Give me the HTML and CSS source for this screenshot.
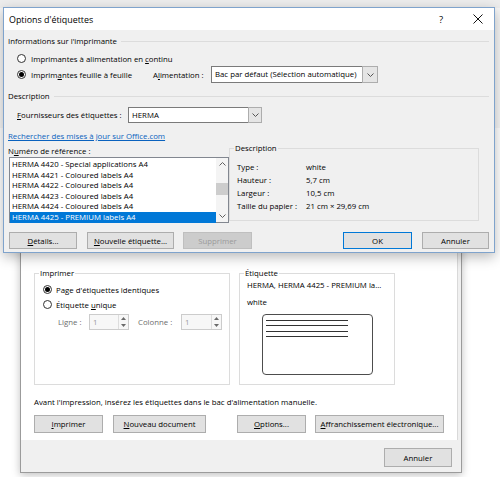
FILE: index.html
```html
<!DOCTYPE html>
<html lang="fr">

<head>
  <meta charset="UTF-8">
  <meta name="viewport" content="width=device-width, initial-scale=1.0">
  <title>Options d'étiquettes</title>
  <link rel="stylesheet" href="styles.css">
</head>

<body>
  <div class="desktop">
    <div class="word-window"></div>

    <!-- Enveloppes et étiquettes (behind) -->
    <div class="window back-dialog">
      <div class="tab-panel">
        <div class="group-row">
          <fieldset class="group print-group">
            <legend>Imprimer</legend>
            <div class="radio-row first"><span class="radio checked"></span><span>Page d'étiquettes identiques</span></div>
            <div class="radio-row"><span class="radio"></span><span>Étiquette <u>u</u>nique</span></div>
            <div class="spin-row">
              <span class="spin-label">Ligne :</span>
              <span class="spin">
                <span class="spin-value">1</span>
                <span class="spin-buttons">
                  <span class="spin-btn"><svg width="5" height="3" viewBox="0 0 5 3"><path d="M0 3 L2.5 0 L5 3 Z" fill="#6a6a6a"/></svg></span>
                  <span class="spin-btn"><svg width="5" height="3" viewBox="0 0 5 3"><path d="M0 0 L2.5 3 L5 0 Z" fill="#6a6a6a"/></svg></span>
                </span>
              </span>
              <span class="spin-label col-label">Colonne :</span>
              <span class="spin wide">
                <span class="spin-value">1</span>
                <span class="spin-buttons">
                  <span class="spin-btn"><svg width="5" height="3" viewBox="0 0 5 3"><path d="M0 3 L2.5 0 L5 3 Z" fill="#6a6a6a"/></svg></span>
                  <span class="spin-btn"><svg width="5" height="3" viewBox="0 0 5 3"><path d="M0 0 L2.5 3 L5 0 Z" fill="#6a6a6a"/></svg></span>
                </span>
              </span>
            </div>
          </fieldset>

          <fieldset class="group label-group">
            <legend>Étiquette</legend>
            <div class="label-info">
              <div class="label-name">HERMA, HERMA 4425 - PREMIUM la...</div>
              <div class="label-type">white</div>
              <div class="label-preview">
                <span class="preview-line"></span>
                <span class="preview-line"></span>
                <span class="preview-line"></span>
                <span class="preview-line"></span>
              </div>
            </div>
          </fieldset>
        </div>

        <p class="note">Avant l'impression, insérez les étiquettes dans le bac d'alimentation manuelle.</p>

        <div class="button-row">
          <button class="btn btn-print"><u>I</u>mprimer</button>
          <button class="btn btn-new"><u>N</u>ouveau document</button>
          <button class="btn btn-options"><u>O</u>ptions...</button>
          <button class="btn btn-postage"><u>A</u>ffranchissement électronique...</button>
        </div>
      </div>
      <div class="dialog-footer">
        <button class="btn btn-cancel-back">Annuler</button>
      </div>
    </div>

    <!-- Options d'étiquettes -->
    <div class="window front-dialog">
      <div class="title-bar">
        <span class="title">Options d'étiquettes</span>
        <span class="title-help">?</span>
        <span class="title-close">
          <svg width="10" height="10" viewBox="0 0 10 10"><path d="M0.5 0.5 L9.5 9.5 M9.5 0.5 L0.5 9.5" stroke="#111" stroke-width="1" fill="none"/></svg>
        </span>
      </div>

      <div class="dialog-body">
        <div class="section-head"><span>Informations sur l'imprimante</span></div>
        <div class="radio-row"><span class="radio"></span><span>Imprimantes à alimentation en <u>c</u>ontinu</span></div>
        <div class="printer-row">
          <span class="radio-label"><span class="radio checked"></span><span>Imprim<u>a</u>ntes feuille à feuille</span></span>
          <span class="field-label">A<u>l</u>imentation :</span>
          <span class="select tray-select">
            <span class="select-value">Bac par défaut (Sélection automatique)</span>
            <span class="select-arrow"><svg width="7" height="4" viewBox="0 0 7 4"><path d="M0.5 0.5 L3.5 3.5 L6.5 0.5" fill="none" stroke="#555" stroke-width="1"/></svg></span>
          </span>
        </div>

        <div class="section-head second"><span>Description</span></div>
        <div class="supplier-row">
          <span class="supplier-label"><u>F</u>ournisseurs des étiquettes :</span>
          <span class="select supplier-select">
            <span class="select-value">HERMA</span>
            <span class="select-arrow"><svg width="7" height="4" viewBox="0 0 7 4"><path d="M0.5 0.5 L3.5 3.5 L6.5 0.5" fill="none" stroke="#555" stroke-width="1"/></svg></span>
          </span>
        </div>

        <a class="update-link" href="#">Rechercher des mises à jour sur Office.com</a>

        <div class="lower">
          <div class="ref-col">
            <div class="ref-label">N<u>u</u>méro de référence :</div>
            <div class="ref-list">
              <div class="items">
                <div class="item">HERMA 4420 - Special applications A4</div>
                <div class="item">HERMA 4421 - Coloured labels A4</div>
                <div class="item">HERMA 4422 - Coloured labels A4</div>
                <div class="item">HERMA 4423 - Coloured labels A4</div>
                <div class="item">HERMA 4424 - Coloured labels A4</div>
                <div class="item selected">HERMA 4425 - PREMIUM labels A4</div>
              </div>
              <div class="scrollbar">
                <span class="sb-btn"><svg width="7" height="4" viewBox="0 0 7 4"><path d="M0.5 3.5 L3.5 0.5 L6.5 3.5" fill="none" stroke="#606060" stroke-width="1"/></svg></span>
                <span class="sb-track"><span class="sb-thumb"></span></span>
                <span class="sb-btn"><svg width="7" height="4" viewBox="0 0 7 4"><path d="M0.5 0.5 L3.5 3.5 L6.5 0.5" fill="none" stroke="#606060" stroke-width="1"/></svg></span>
              </div>
            </div>
          </div>

          <fieldset class="group desc-group">
            <legend>Description</legend>
            <div class="desc-grid">
              <span>Type :</span><span>white</span>
              <span>Hauteur :</span><span>5,7 cm</span>
              <span>Largeur :</span><span>10,5 cm</span>
              <span>Taille du papier :</span><span>21 cm × 29,69 cm</span>
            </div>
          </fieldset>
        </div>

        <div class="action-row">
          <button class="btn btn-details"><u>D</u>étails...</button>
          <button class="btn btn-new-label"><u>N</u>ouvelle étiquette...</button>
          <button class="btn btn-delete" disabled>Supprimer</button>
          <button class="btn btn-ok">OK</button>
          <button class="btn btn-cancel">Annuler</button>
        </div>
      </div>
    </div>
  </div>
</body>

</html>
```

FILE: styles.css
```css
body {
  margin: 0;
  font-family: "Open Sans", "Noto Sans", sans-serif;
  font-size: 7.8px;
  color: #000;
  background-color: #fff;
}

u {
  text-decoration: underline;
  text-underline-offset: 1px;
}

.desktop {
  position: relative;
  width: 500px;
  height: 477px;
  overflow: hidden;
  background-color: #fff;
}

.word-window {
  height: 120px;
  background-color: #f6f6f6;
  border-top: 8px solid #ededed;
}

.window {
  position: absolute;
  box-sizing: border-box;
  display: flex;
  flex-direction: column;
  background-color: #f0f0f0;
}

/* ---------- front dialog ---------- */

.front-dialog {
  left: 3px;
  top: 7px;
  width: 492px;
  height: 246px;
  border: 1px solid #7fa3cc;
  box-shadow: 0 4px 12px rgba(0, 0, 0, 0.28);
  z-index: 2;
}

.title-bar {
  height: 22px;
  display: flex;
  align-items: center;
  background-color: #fff;
}

.title {
  flex: 1;
  padding-left: 5px;
  font-size: 8.9px;
}

.title-help {
  width: 20px;
  margin-right: 11px;
  text-align: center;
  font-size: 9.5px;
}

.title-close {
  width: 32px;
  display: flex;
  justify-content: center;
}

.dialog-body {
  flex: 1;
  display: flex;
  flex-direction: column;
  padding: 5px 5px 0 4px;
}

.section-head {
  height: 12px;
  display: flex;
  align-items: center;
  gap: 4px;
}

.section-head::after {
  content: "";
  flex: 1;
  height: 1px;
  background-color: #dcdcdc;
}

.section-head.second {
  margin-top: 7px;
}

.radio-row {
  height: 15px;
  display: flex;
  align-items: center;
  padding-left: 9px;
  margin-top: 4px;
}

.radio {
  width: 9px;
  height: 9px;
  box-sizing: border-box;
  border: 1px solid #333;
  border-radius: 50%;
  background-color: #fff;
  margin-right: 5px;
  display: flex;
  align-items: center;
  justify-content: center;
  flex-shrink: 0;
}

.radio.checked::after {
  content: "";
  width: 5px;
  height: 5px;
  border-radius: 50%;
  background-color: #000;
}

.printer-row {
  height: 17px;
  display: flex;
  align-items: center;
  padding-left: 9px;
}

.radio-label {
  width: 136px;
  display: flex;
  align-items: center;
}

.field-label {
  width: 58px;
}

.select {
  display: flex;
  box-sizing: border-box;
  height: 17px;
}

.select-value {
  flex: 1;
  padding-left: 3px;
  background-color: #fff;
  border: 1px solid #7a7a7a;
  border-right: none;
  line-height: 15px;
  white-space: nowrap;
  overflow: hidden;
}

.select-arrow {
  width: 14px;
  display: flex;
  align-items: center;
  justify-content: center;
  background-color: #e5e5e5;
  border: 1px solid #adadad;
}

.tray-select {
  width: 167px;
}

.supplier-row {
  height: 16px;
  display: flex;
  align-items: center;
  padding-left: 9px;
  margin-top: 5px;
}

.supplier-label {
  width: 111px;
}

.supplier-select {
  width: 134px;
  height: 16px;
}

.supplier-select .select-value {
  line-height: 14px;
}

.supplier-select .select-arrow {
  width: 12px;
}

.update-link {
  margin-top: 7px;
  line-height: 12px;
  color: #0a62be;
  text-decoration: underline;
  align-self: flex-start;
}

.lower {
  margin-top: 1px;
  display: flex;
  align-items: flex-start;
}

.ref-col {
  width: 221px;
}

.ref-label {
  margin-top: 2px;
  line-height: 12px;
}

.ref-list {
  margin-left: 1px;
  width: 220px;
  height: 66px;
  box-sizing: border-box;
  border: 1px solid #828790;
  background-color: #fff;
  display: flex;
}

.items {
  flex: 1;
  padding-top: 1px;
}

.item {
  height: 10.6px;
  line-height: 10.6px;
  padding-left: 2px;
  white-space: nowrap;
}

.item.selected {
  background-color: #0078d7;
  color: #fff;
}

.scrollbar {
  width: 12px;
  display: flex;
  flex-direction: column;
  background-color: #f4f4f4;
}

.sb-btn {
  height: 12px;
  display: flex;
  align-items: center;
  justify-content: center;
}

.sb-track {
  flex: 1;
}

.sb-thumb {
  display: block;
  margin-top: 13px;
  height: 12px;
  background-color: #cdcdcd;
}

fieldset.group {
  margin: 0;
  padding: 0 4px;
  min-width: 0;
  box-sizing: border-box;
  border: 1px solid #dcdcdc;
}

fieldset.group legend {
  padding: 0 1px;
  line-height: 11px;
}

.desc-group {
  margin-left: 10px;
  width: 250px;
  height: 78px;
}

.desc-grid {
  padding: 6px 0 0 3px;
  display: grid;
  grid-template-columns: 69px auto;
  grid-auto-rows: 13px;
  align-items: center;
}

.action-row {
  margin-top: 9px;
  display: flex;
}

.btn {
  height: 17px;
  box-sizing: border-box;
  padding: 0;
  border: 1px solid #adadad;
  background-color: #e1e1e1;
  font: inherit;
  color: #000;
}

.btn-details {
  margin-left: 1px;
  width: 68px;
}

.btn-new-label {
  margin-left: 10px;
  width: 87px;
}

.btn-delete {
  margin-left: 9px;
  width: 69px;
  background-color: #cccccc;
  border-color: #bfbfbf;
  color: #9a9a9a;
}

.btn-ok {
  margin-left: auto;
  width: 69px;
  border-color: #0078d7;
}

.btn-cancel {
  margin-left: 10px;
  width: 67px;
}

/* ---------- back dialog ---------- */

.back-dialog {
  left: 20px;
  top: 231px;
  width: 442px;
  height: 242px;
  border: 1px solid #9b9b9b;
  box-shadow: 0 2px 8px rgba(0, 0, 0, 0.25);
  z-index: 1;
}

.tab-panel {
  height: 208px;
  box-sizing: border-box;
  margin-right: 3px;
  padding: 36px 0 0 13px;
  background-color: #fff;
  border-right: 1px solid #d9d9d9;
}

.group-row {
  display: flex;
  gap: 9px;
}

.print-group {
  width: 196px;
  height: 117px;
}

.label-group {
  width: 156px;
  height: 117px;
}

.print-group .radio-row {
  margin-top: 0;
  padding-left: 4px;
}

.print-group .radio-row.first {
  margin-top: 3px;
}

.print-group .radio {
  margin-right: 4px;
}

.spin-row {
  height: 16px;
  margin-top: 2px;
  padding-left: 19px;
  display: flex;
  align-items: center;
}

.spin-label {
  width: 31px;
  color: #6d6d6d;
}

.col-label {
  margin-left: 9px;
  width: 43px;
}

.spin {
  width: 40px;
  height: 16px;
  box-sizing: border-box;
  display: flex;
  border: 1px solid #cccccc;
  background-color: #f7f7f7;
}

.spin.wide {
  width: 41px;
}

.spin-value {
  flex: 1;
  padding-left: 3px;
  line-height: 14px;
  color: #9a9a9a;
}

.spin-buttons {
  width: 9px;
  display: flex;
  flex-direction: column;
  border-left: 1px solid #dddddd;
}

.spin-btn {
  flex: 1;
  display: flex;
  align-items: center;
  justify-content: center;
}

.label-info {
  padding-left: 3px;
}

.label-name {
  line-height: 12px;
  white-space: nowrap;
}

.label-type {
  margin-top: 5px;
  line-height: 12px;
}

.label-preview {
  margin: 6px 0 0 15px;
  width: 111px;
  height: 61px;
  box-sizing: border-box;
  border: 1px solid #4d4d4d;
  border-radius: 4px;
  padding: 5px 0 0 3px;
  display: flex;
  flex-direction: column;
  gap: 4.33px;
}

.preview-line {
  width: 82px;
  height: 1px;
  background-color: #333;
}

.note {
  margin: 11px 0 0;
  line-height: 12px;
}

.button-row {
  margin-top: 7px;
  display: flex;
}

.button-row .btn {
  height: 18px;
}

.btn-print {
  width: 69px;
}

.btn-new {
  margin-left: 10px;
  width: 93px;
}

.btn-options {
  margin-left: 31px;
  width: 69px;
}

.btn-postage {
  margin-left: 9px;
  width: 129px;
}

.dialog-footer {
  flex: 1;
  display: flex;
  justify-content: flex-end;
  align-items: flex-start;
  padding: 8px 9px 0 0;
}

.btn-cancel-back {
  width: 68px;
  height: 19px;
}
```
